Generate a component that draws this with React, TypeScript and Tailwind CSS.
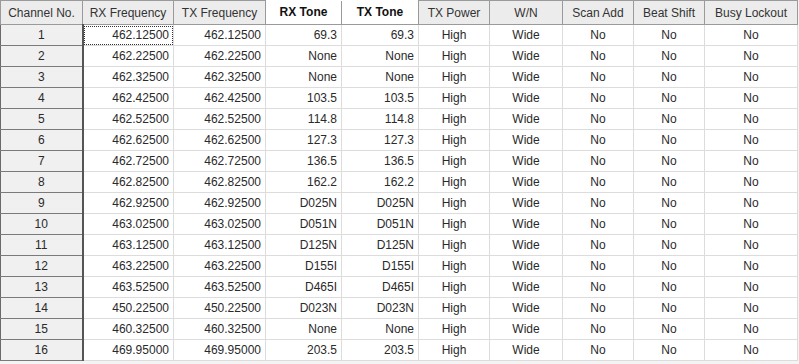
import React from 'react';

type Row = {
  ch: number;
  rx: string;
  tx: string;
  rxTone: string;
  txTone: string;
};

const ROWS: Row[] = [
  { ch: 1, rx: '462.12500', tx: '462.12500', rxTone: '69.3', txTone: '69.3' },
  { ch: 2, rx: '462.22500', tx: '462.22500', rxTone: 'None', txTone: 'None' },
  { ch: 3, rx: '462.32500', tx: '462.32500', rxTone: 'None', txTone: 'None' },
  { ch: 4, rx: '462.42500', tx: '462.42500', rxTone: '103.5', txTone: '103.5' },
  { ch: 5, rx: '462.52500', tx: '462.52500', rxTone: '114.8', txTone: '114.8' },
  { ch: 6, rx: '462.62500', tx: '462.62500', rxTone: '127.3', txTone: '127.3' },
  { ch: 7, rx: '462.72500', tx: '462.72500', rxTone: '136.5', txTone: '136.5' },
  { ch: 8, rx: '462.82500', tx: '462.82500', rxTone: '162.2', txTone: '162.2' },
  { ch: 9, rx: '462.92500', tx: '462.92500', rxTone: 'D025N', txTone: 'D025N' },
  { ch: 10, rx: '463.02500', tx: '463.02500', rxTone: 'D051N', txTone: 'D051N' },
  { ch: 11, rx: '463.12500', tx: '463.12500', rxTone: 'D125N', txTone: 'D125N' },
  { ch: 12, rx: '463.22500', tx: '463.22500', rxTone: 'D155I', txTone: 'D155I' },
  { ch: 13, rx: '463.52500', tx: '463.52500', rxTone: 'D465I', txTone: 'D465I' },
  { ch: 14, rx: '450.22500', tx: '450.22500', rxTone: 'D023N', txTone: 'D023N' },
  { ch: 15, rx: '460.32500', tx: '460.32500', rxTone: 'None', txTone: 'None' },
  { ch: 16, rx: '469.95000', tx: '469.95000', rxTone: '203.5', txTone: '203.5' },
];

const COLS = [
  { label: 'Channel No.', w: 'w-[82px]' },
  { label: 'RX Frequency', w: 'w-[91px]' },
  { label: 'TX Frequency', w: 'w-[92px]' },
  { label: 'RX Tone', w: 'w-[76px]', bold: true },
  { label: 'TX Tone', w: 'w-[77px]', bold: true },
  { label: 'TX Power', w: 'w-[71px]' },
  { label: 'W/N', w: 'w-[73px]' },
  { label: 'Scan Add', w: 'w-[71px]' },
  { label: 'Beat Shift', w: 'w-[71px]' },
  { label: 'Busy Lockout', w: 'w-[93px]' },
];

const cell = 'h-[21px] border border-[#dcdcdc] px-[4px] py-0 leading-none';

function App() {
  return (
    <div className="w-[799px] h-[364px] overflow-hidden bg-[#f4f4f4] text-[12px] text-[#2a2a2a] font-['Liberation_Sans',Arial,sans-serif]">
      <table className="table-fixed border-collapse bg-white w-[797px]">
        <colgroup>
          {COLS.map(c => (
            <col key={c.label} className={c.w} />
          ))}
        </colgroup>
        <thead>
          <tr>
            {COLS.map(c => (
              <th
                key={c.label}
                className={
                  'h-[24px] border border-[#9a9a9a] px-1 text-center ' +
                  (c.bold
                    ? 'bg-white font-bold text-[#111] border-t-0'
                    : 'bg-[#ececec] font-normal text-[#333]')
                }
              >
                {c.label}
              </th>
            ))}
          </tr>
        </thead>
        <tbody>
          {ROWS.map(r => (
            <tr key={r.ch}>
              <td className="h-[21px] border border-[#7a7a7a] border-l-[#6a6a6a] border-r-[2px] border-r-[#555] bg-[#f0f0f0] text-center leading-none">
                {r.ch}
              </td>
              <td
                className={
                  cell +
                  ' text-right' +
                  (r.ch === 1 ? ' outline-1 outline-dotted outline-[#333] -outline-offset-2' : '')
                }
              >
                {r.rx}
              </td>
              <td className={cell + ' text-right'}>{r.tx}</td>
              <td className={cell + ' text-right'}>{r.rxTone}</td>
              <td className={cell + ' text-right'}>{r.txTone}</td>
              <td className={cell + ' text-center'}>High</td>
              <td className={cell + ' text-center'}>Wide</td>
              <td className={cell + ' text-center'}>No</td>
              <td className={cell + ' text-center'}>No</td>
              <td className={cell + ' text-center'}>No</td>
            </tr>
          ))}
        </tbody>
      </table>
    </div>
  );
}

export default App;
